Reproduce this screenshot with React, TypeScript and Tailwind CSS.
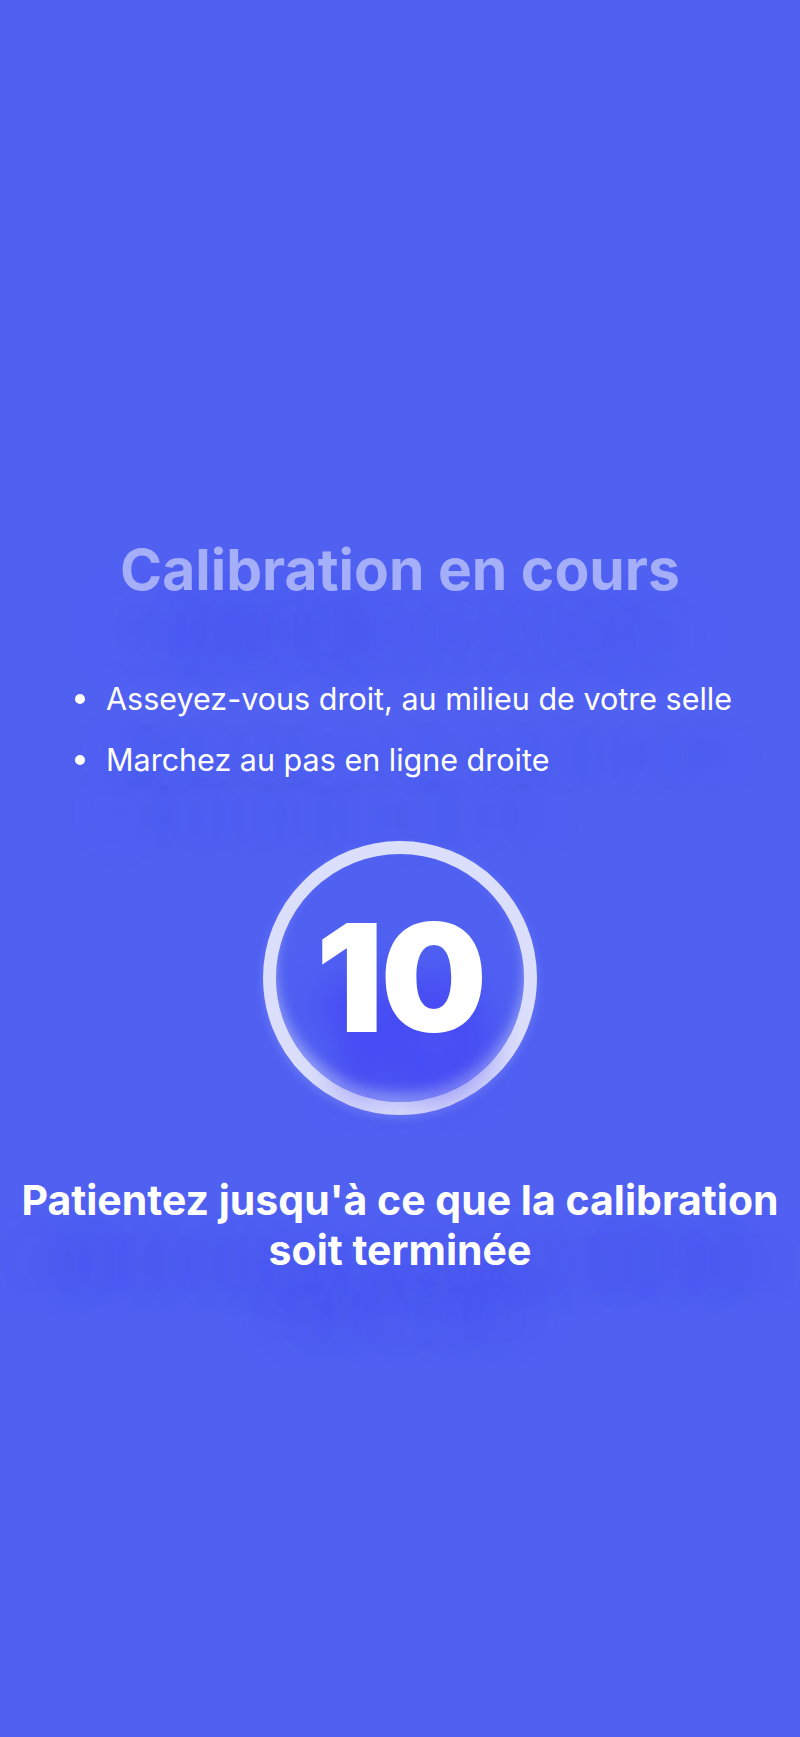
const steps = [
  "Asseyez-vous droit, au milieu de votre selle",
  "Marchez au pas en ligne droite",
];

export default function App() {
  return (
    <div
      className="flex min-h-[1737px] w-full flex-col items-center bg-[#5061f2] pt-[530px] text-white"
      style={{ fontFamily: "Inter, 'Noto Sans', sans-serif" }}
    >
      <h1 className="w-full px-6 text-center text-[57px] font-bold leading-[80px] text-[#a5aef8] [text-shadow:0_60px_60px_rgba(62,58,238,0.28)]">
        Calibration en cours
      </h1>

      <ul className="mt-[58px] w-full pl-[75px] [text-shadow:0_55px_60px_rgba(62,58,238,0.25)]">
        {steps.map((s) => (
          <li key={s} className="flex items-center gap-[21px] whitespace-nowrap text-[30.5px] leading-[61px]">
            <span className="h-2.5 w-2.5 shrink-0 rounded-full bg-white" />
            {s}
          </li>
        ))}
      </ul>

      <div className="mt-[51px] flex h-[274px] w-[274px] items-center justify-center rounded-full border-[13px] border-[#dcdffb] shadow-[inset_0_-10px_12px_rgba(220,223,251,0.45),0_4px_8px_rgba(220,223,251,0.2)]">
        <span className="text-[150px] font-black leading-none tracking-[-0.02em] [text-shadow:0_60px_40px_rgba(64,56,246,0.8)]">
          10
        </span>
      </div>

      <p className="mt-[60px] w-full px-4 text-center text-[41px] font-bold leading-[50px] [text-shadow:0_60px_60px_rgba(62,58,238,0.3)]">
        Patientez jusqu'à ce que la calibration soit terminée
      </p>
    </div>
  );
}
